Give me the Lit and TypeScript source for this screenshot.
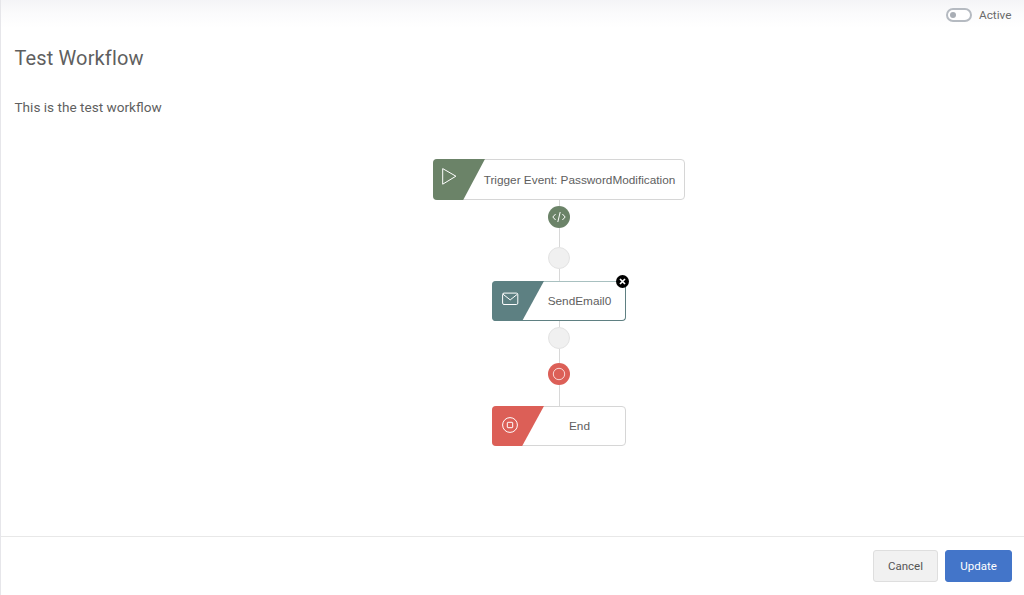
import { LitElement, html, css, svg } from "lit";
import { customElement } from "lit/decorators.js";

const playIcon = svg`<path d="M2.2 1.6 L15.4 9.2 L2.2 17.2 Z" fill="none" stroke="#fff" stroke-width="1" stroke-linejoin="round"/>`;
const mailIcon = svg`<rect x="0.6" y="0.6" width="15.2" height="11.4" rx="1.4" fill="none" stroke="#fff" stroke-width="1"/><path d="M0.9 1.6 L8.2 7.4 L15.5 1.6" fill="none" stroke="#fff" stroke-width="1"/>`;
const stopIcon = svg`<circle cx="8" cy="8" r="7.4" fill="none" stroke="#fff" stroke-width="1"/><rect x="5.3" y="5.3" width="5.4" height="5.4" rx="0.6" fill="none" stroke="#fff" stroke-width="1"/>`;

@customElement("app-root")
export class AppRoot extends LitElement {
  static styles = css`
    :host {
      display: flex;
      flex-direction: column;
      width: 1024px;
      height: 595px;
      box-sizing: border-box;
      border-left: 1px solid #e6e6ea;
      background: linear-gradient(#f4f4f7 0, #fbfbfc 14px, #fff 28px);
      font-family: Roboto, "Liberation Sans", sans-serif;
      color: #5f5f5f;
      overflow: hidden;
    }
    .top {
      height: 30px;
      display: flex;
      justify-content: flex-end;
      align-items: center;
      gap: 7px;
      padding-right: 12.5px;
      font-size: 11.8px;
      color: #6b6b6b;
    }
    .toggle {
      box-sizing: border-box;
      width: 26px;
      height: 14px;
      border: 2px solid #b5bac1;
      border-radius: 7px;
      padding: 2px;
      background: #fff;
      display: flex;
    }
    .toggle i {
      width: 6px;
      height: 6px;
      border-radius: 50%;
      background: #a9aeb5;
    }
    h1 {
      margin: 15px 0 0 13.5px;
      font-size: 20px;
      line-height: 26px;
      font-weight: 400;
      color: #5f5f5f;
      letter-spacing: 0.13px;
    }
    p {
      margin: 27px 0 0 13.5px;
      font-size: 13.6px;
      line-height: 18px;
      color: #5f5f5f;
    }
    .canvas {
      flex: 1;
      display: flex;
      flex-direction: column;
      align-items: center;
      padding: 43px 0 0 93px;
      min-height: 0;
    }
    .node {
      position: relative;
      box-sizing: border-box;
      display: flex;
      height: 40px;
      width: 134px;
      border: 1px solid #d6d6d6;
      border-radius: 4px;
      background: #fff;
      font-family: "Liberation Sans", Arial, sans-serif;
      font-size: 11.8px;
      color: #5e5e5e;
    }
    .node.wide {
      width: 252px;
      height: 41px;
    }
    .node.selected {
      border-color: #5f8082;
      border-top-color: #a8c0c0;
      border-left-color: #a8c0c0;
    }
    .slant {
      flex: none;
      width: 52px;
      margin: -1px -10px -1px -1px;
      border-radius: 4px 0 0 4px;
      clip-path: polygon(0 0, 100% 0, 58% 100%, 0 100%);
    }
    .slant svg {
      display: block;
    }
    .green { background: #6b8368; }
    .teal { background: #5d8082; }
    .red { background: #dc5f57; }
    .label {
      flex: 1;
      min-width: 0;
      display: flex;
      align-items: center;
      justify-content: center;
      white-space: nowrap;
    }
    .line {
      width: 1px;
      background: #d8d8d8;
    }
    .dot {
      box-sizing: border-box;
      width: 22px;
      height: 22px;
      border-radius: 50%;
      display: flex;
      align-items: center;
      justify-content: center;
    }
    .dot.empty {
      background: #f0f0f0;
      border: 1px solid #e3e3e3;
    }
    .close {
      position: absolute;
      top: -7px;
      right: -4px;
      width: 13px;
      height: 13px;
      border-radius: 50%;
      background: #000;
      display: flex;
      align-items: center;
      justify-content: center;
    }
    .footer {
      box-sizing: border-box;
      flex: none;
      height: 59px;
      border-top: 1px solid #e8e8e8;
      display: flex;
      justify-content: flex-end;
      gap: 7px;
      padding: 13px 12px 0 0;
    }
    button {
      box-sizing: border-box;
      height: 32px;
      border-radius: 3px;
      font-family: Roboto, "Liberation Sans", sans-serif;
      font-size: 11.5px;
      padding: 0;
    }
    .cancel {
      width: 65px;
      background: #f1f1f1;
      border: 1px solid #dedede;
      color: #555;
    }
    .update {
      width: 67px;
      background: #4375c9;
      border: 1px solid #4375c9;
      color: #fff;
    }
    .ring {
      fill: none;
      stroke: #fff;
      stroke-opacity: 0.75;
      stroke-width: 1;
    }
  `;

  render() {
    return html`
      <div class="top">
        <span class="toggle"><i></i></span>
        <span>Active</span>
      </div>
      <h1>Test Workflow</h1>
      <p>This is the test workflow</p>
      <div class="canvas">
        <div class="node wide">
          <div class="slant green">
            <svg width="52" height="41" viewBox="0 0 52 41"><g transform="translate(7.5 8)">${playIcon}</g></svg>
          </div>
          <div class="label">Trigger Event: PasswordModification</div>
        </div>
        <div class="line" style="height:6px"></div>
        <div class="dot green">
          <svg width="14" height="12" viewBox="0 0 14 12" fill="none" stroke="#fff" stroke-width="1">
            <path d="M3.6 3 L0.8 6 L3.6 9 M10.4 3 L13.2 6 L10.4 9 M8.2 1 L5.8 11" />
          </svg>
        </div>
        <div class="line" style="height:19px"></div>
        <div class="dot empty"></div>
        <div class="line" style="height:12px"></div>
        <div class="node selected">
          <div class="slant teal">
            <svg width="52" height="40" viewBox="0 0 52 40"><g transform="translate(10 11.5)">${mailIcon}</g></svg>
          </div>
          <div class="label">SendEmail0</div>
          <span class="close">
            <svg width="7" height="7" viewBox="0 0 7 7"><path d="M1 1 L6 6 M6 1 L1 6" stroke="#fff" stroke-width="1.7" /></svg>
          </span>
        </div>
        <div class="line" style="height:6px"></div>
        <div class="dot empty"></div>
        <div class="line" style="height:14px"></div>
        <div class="dot red">
          <svg width="14" height="14" viewBox="0 0 14 14"><circle class="ring" cx="7" cy="7" r="5.7" /></svg>
        </div>
        <div class="line" style="height:21px"></div>
        <div class="node">
          <div class="slant red">
            <svg width="52" height="40" viewBox="0 0 52 40"><g transform="translate(10 11)">${stopIcon}</g></svg>
          </div>
          <div class="label">End</div>
        </div>
      </div>
      <div class="footer">
        <button class="cancel">Cancel</button>
        <button class="update">Update</button>
      </div>
    `;
  }
}
